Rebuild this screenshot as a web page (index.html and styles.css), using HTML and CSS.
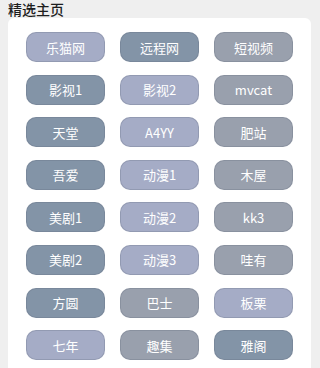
FILE: index.html
```html
<!DOCTYPE html>
<html>
<head>
<meta charset="utf-8">
<link rel="stylesheet" href="styles.css">
</head>
<body>
<div class="title">精选主页</div>
<div class="card">
  <div class="grid">
    <div class="btn a">乐猫网</div>
    <div class="btn b">远程网</div>
    <div class="btn c">短视频</div>
    <div class="btn b">影视1</div>
    <div class="btn a">影视2</div>
    <div class="btn c">mvcat</div>
    <div class="btn b">天堂</div>
    <div class="btn a">A4YY</div>
    <div class="btn c">肥站</div>
    <div class="btn b">吾爱</div>
    <div class="btn a">动漫1</div>
    <div class="btn c">木屋</div>
    <div class="btn b">美剧1</div>
    <div class="btn a">动漫2</div>
    <div class="btn c">kk3</div>
    <div class="btn b">美剧2</div>
    <div class="btn a">动漫3</div>
    <div class="btn c">哇有</div>
    <div class="btn b">方圆</div>
    <div class="btn c">巴士</div>
    <div class="btn a">板栗</div>
    <div class="btn a">七年</div>
    <div class="btn c">趣集</div>
    <div class="btn b">雅阁</div>
  </div>
</div>
</body>
</html>
```
FILE: styles.css
```css
html, body {
  margin: 0;
  padding: 0;
  background: #efefef;
  font-family: "Noto Sans CJK SC", "Noto Sans", sans-serif;
}
.title {
  height: 18px;
  line-height: 18px;
  padding: 0 8px;
  font-size: 14px;
  color: #1e1e1e;
  font-weight: 500;
}
.card {
  margin: 0 9px 0 8px;
  background: #ffffff;
  border-radius: 6px;
  padding: 14px 17px 20px 18px;
}
.grid {
  display: grid;
  grid-template-columns: repeat(3, 79px);
  column-gap: 15px;
  row-gap: 12.6px;
}
.btn {
  height: 30px;
  box-sizing: border-box;
  border-radius: 10px;
  display: flex;
  align-items: center;
  justify-content: center;
  color: #ffffff;
  font-size: 13px;
  border: 1px solid rgba(90, 100, 120, 0.25);
}
.a { background: #a5acc6; }
.b { background: #8394a7; }
.c { background: #99a0ad; }
```
